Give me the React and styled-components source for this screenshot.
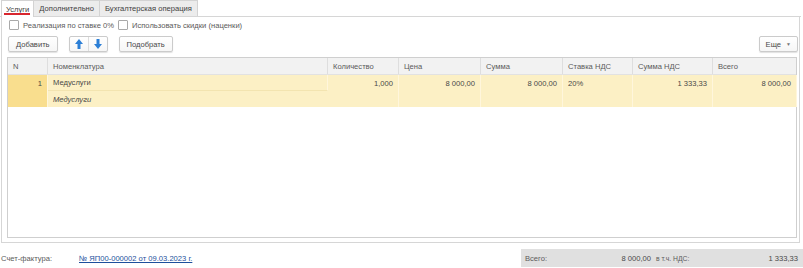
import React from 'react'
import styled, {createGlobalStyle} from 'styled-components'

const GlobalStyle = createGlobalStyle`
  html, body {
    margin: 0;
    padding: 0;
    background: #ffffff;
  }
  body {
    font-family: "Liberation Sans", Arial, sans-serif;
    font-size: 7.6px;
    color: #4d4d4d;
  }
`

const Page = styled.div`
  width: 803px;
  height: 268px;
  display: flex;
  flex-direction: column;
  box-sizing: border-box;
  overflow: hidden;
`

const TabBar = styled.div`
  display: flex;
  height: 17px;
  padding-left: 1px;
  border-bottom: 1px solid #d6d6d6;
  box-sizing: border-box;
  width: 801px;
`

const Tab = styled.div`
  position: relative;
  height: ${p => (p.$active ? '17px' : '16px')};
  padding: 0 ${p => (p.$active ? '4px' : '5px')};
  display: flex;
  align-items: center;
  box-sizing: border-box;
  border: 1px solid #d3d3d3;
  border-bottom: none;
  margin-right: -1px;
  background: ${p => (p.$active ? '#ffffff' : '#ececec')};
  color: #404040;
  white-space: nowrap;
  z-index: ${p => (p.$active ? 1 : 0)};

  ${p => p.$active && `
    &::after {
      content: "";
      position: absolute;
      left: 2px;
      right: 3px;
      bottom: 2px;
      height: 2px;
      background: #d8262e;
    }
  `}
`

const Panel = styled.div`
  width: 799px;
  height: 226px;
  margin-left: 1px;
  border: 1px solid #d6d6d6;
  border-top: none;
  box-sizing: border-box;
  display: flex;
  flex-direction: column;
  padding: 2px 1px 4px 5px;
`

const CheckRow = styled.div`
  display: flex;
  align-items: center;
  gap: 4px;
  height: 12px;
  padding-left: 2px;
`

const CheckLabel = styled.label`
  display: flex;
  align-items: center;
  gap: 4px;
  color: #5a5a5a;
  white-space: nowrap;
`

const Box = styled.span`
  width: 10px;
  height: 10px;
  box-sizing: border-box;
  border: 1px solid #a9a9a9;
  border-radius: 1px;
  background: #ffffff;
`

const Toolbar = styled.div`
  display: flex;
  align-items: center;
  height: 16px;
  margin-top: 5px;
  padding-left: 1px;
`

const Button = styled.div`
  height: 16px;
  box-sizing: border-box;
  padding: 0 ${p => p.$pad || 8}px;
  border: 1px solid #cbcbcb;
  border-radius: 2px;
  background: linear-gradient(#ffffff, #f6f6f6);
  box-shadow: 0 1px 1px rgba(0, 0, 0, 0.12);
  display: flex;
  align-items: center;
  justify-content: center;
  color: #484848;
  white-space: nowrap;
  margin-left: ${p => p.$ml || 0}px;
`

const Group = styled.div`
  display: flex;
  height: 16px;
  margin-left: ${p => p.$ml || 0}px;
  border: 1px solid #cbcbcb;
  border-radius: 2px;
  box-sizing: border-box;
  box-shadow: 0 1px 1px rgba(0, 0, 0, 0.12);
  background: linear-gradient(#ffffff, #f6f6f6);
`

const GroupPart = styled.div`
  width: 18px;
  display: flex;
  align-items: center;
  justify-content: center;
  & + & {
    border-left: 1px solid #dcdcdc;
  }
`

const Spacer = styled.div`
  flex: 1;
`

const Caret = styled.span`
  margin-left: 5px;
  font-size: 5px;
  color: #777777;
`

const Table = styled.div`
  flex: 1;
  margin-top: 5px;
  margin-right: 1px;
  border: 1px solid #cfcfcf;
  box-sizing: border-box;
  display: flex;
  flex-direction: column;
`

const COLS = '40px 280px 71px 82px 82px 70px 80px 84px'

const HeadRow = styled.div`
  display: grid;
  grid-template-columns: ${COLS};
  height: 16px;
  background: #f2f2f2;
  border-bottom: 1px solid #e2e2e2;
`

const HeadCell = styled.div`
  display: flex;
  align-items: center;
  padding-left: 5px;
  color: #5a5a5a;
  border-right: 1px solid #dedede;
  white-space: nowrap;
  &:last-child {
    border-right: none;
  }
`

const BodyRow = styled.div`
  display: grid;
  grid-template-columns: ${COLS};
  grid-template-rows: 16px 16px;
  background: #fcf0c5;
`

const Cell = styled.div`
  grid-row: ${p => (p.$span ? '1 / span 2' : 'auto')};
  grid-column: ${p => p.$col};
  display: flex;
  align-items: ${p => (p.$span ? 'flex-start' : 'center')};
  justify-content: ${p => (p.$right ? 'flex-end' : 'flex-start')};
  padding: ${p => (p.$span ? '4px 5px 0 5px' : '0 5px')};
  background: ${p => (p.$key ? '#f9de8e' : 'transparent')};
  border-right: 1px solid #fff6dc;
  border-bottom: ${p => (p.$split ? '1px solid #f3e4b0' : 'none')};
  font-style: ${p => (p.$italic ? 'italic' : 'normal')};
  color: #484848;
  white-space: nowrap;
  &:last-child {
    border-right: none;
  }
`

const Footer = styled.div`
  display: flex;
  align-items: center;
  height: 18px;
  margin-top: 6px;
  padding-left: 1px;
`

const FooterLabel = styled.div`
  width: 78px;
  color: #5a5a5a;
`

const Link = styled.a`
  color: #1d4f9c;
  text-decoration: underline;
`

const Totals = styled.div`
  margin-left: auto;
  width: 282px;
  height: 18px;
  background: #e0e0e0;
  display: flex;
  align-items: center;
  padding: 0 5px 0 4px;
  box-sizing: border-box;
  color: #5a5a5a;
`

const TotalValue = styled.div`
  width: ${p => p.$w}px;
  text-align: right;
  color: #484848;
`

const TotalLabel = styled.div`
  width: ${p => p.$w}px;
  padding-left: ${p => p.$pl || 0}px;
  box-sizing: border-box;
  font-size: ${p => p.$small ? '6.8px' : 'inherit'};
`

const Arrow = ({ down }) => (
  <svg width="8" height="10" viewBox="0 0 8 10" style={{transform: down ? 'rotate(180deg)' : 'none'}}>
    <path d="M4 0 L8 5 L5.5 5 L5.5 10 L2.5 10 L2.5 5 L0 5 Z" fill="#2c7fd6" />
  </svg>
)

const headers = ['N', 'Номенклатура', 'Количество', 'Цена', 'Сумма', 'Ставка НДС', 'Сумма НДС', 'Всего']

export default function App() {
  return (
    <Page>
      <GlobalStyle />
      <TabBar>
        <Tab $active>Услуги</Tab>
        <Tab>Дополнительно</Tab>
        <Tab>Бухгалтерская операция</Tab>
      </TabBar>
      <Panel>
        <CheckRow>
          <CheckLabel><Box />Реализация по ставке 0%</CheckLabel>
          <CheckLabel><Box />Использовать скидки (наценки)</CheckLabel>
        </CheckRow>
        <Toolbar>
          <Button $pad={7}>Добавить</Button>
          <Group $ml={11}>
            <GroupPart><Arrow /></GroupPart>
            <GroupPart><Arrow down /></GroupPart>
          </Group>
          <Button $ml={11} $pad={7}>Подобрать</Button>
          <Spacer />
          <Button $pad={6}>Еще<Caret>▼</Caret></Button>
        </Toolbar>
        <Table>
          <HeadRow>
            {headers.map(h => <HeadCell key={h}>{h}</HeadCell>)}
          </HeadRow>
          <BodyRow>
            <Cell $col={1} $span $right $key>1</Cell>
            <Cell $col={2} $split>Медуслуги</Cell>
            <Cell $col={3} $span $right>1,000</Cell>
            <Cell $col={4} $span $right>8 000,00</Cell>
            <Cell $col={5} $span $right>8 000,00</Cell>
            <Cell $col={6} $span>20%</Cell>
            <Cell $col={7} $span $right>1 333,33</Cell>
            <Cell $col={8} $span $right>8 000,00</Cell>
            <Cell $col={2} $italic>Медуслуги</Cell>
          </BodyRow>
        </Table>
      </Panel>
      <Footer>
        <FooterLabel>Счет-фактура:</FooterLabel>
        <Link>№ ЯП00-000002 от 09.03.2023 г.</Link>
        <Totals>
          <TotalLabel $w={56}>Всего:</TotalLabel>
          <TotalValue $w={70}>8 000,00</TotalValue>
          <TotalLabel $w={72} $pl={5} $small>в т.ч. НДС:</TotalLabel>
          <TotalValue $w={75}>1 333,33</TotalValue>
        </Totals>
      </Footer>
    </Page>
  )
}
